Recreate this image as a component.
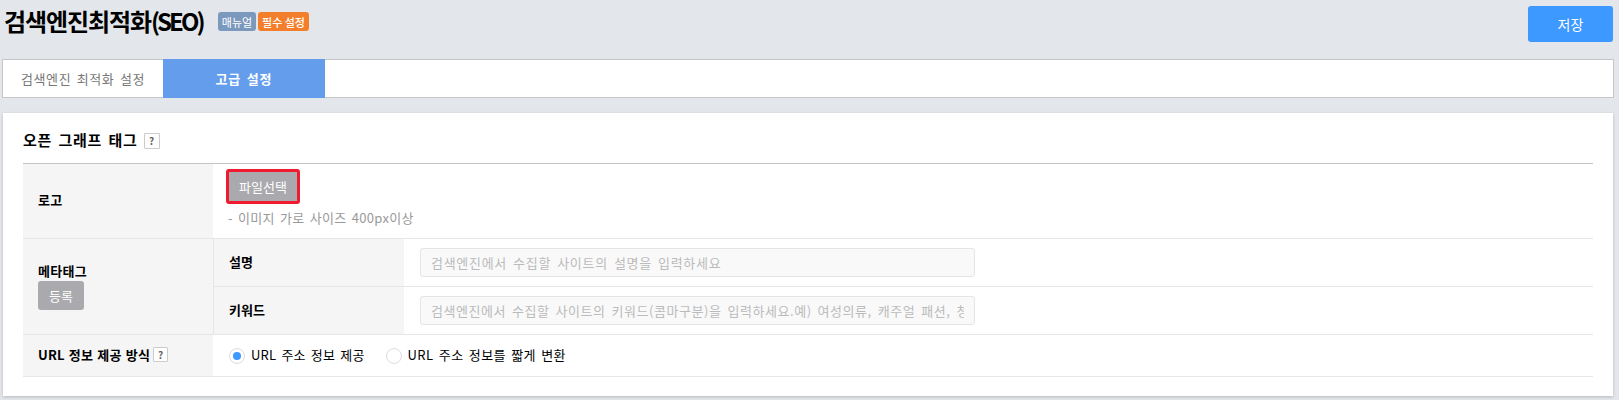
<div class="page">
  <header class="head">
    <div class="head-left">
      <h1>검색엔진최적화<span class="seo">(SEO)</span></h1>
      <span class="badge manual">매뉴얼</span>
      <span class="badge required">필수 설정</span>
    </div>
    <button class="save">저장</button>
  </header>

  <nav class="tabs">
    <div class="tab">검색엔진 최적화 설정</div>
    <div class="tab active">고급 설정</div>
  </nav>

  <section class="card">
    <h2>오픈 그래프 태그 <span class="help large">?</span></h2>

    <div class="table">
      <div class="row logo-row">
        <div class="th">로고</div>
        <div class="td logo-cell">
          <button class="file">파일선택</button>
          <p class="hint">- 이미지 가로 사이즈 400px이상</p>
        </div>
      </div>

      <div class="row meta-row">
        <div class="th meta-th">
          <span>메타태그</span>
          <button class="add">등록</button>
        </div>
        <div class="sub">
          <div class="sub-row">
            <div class="sub-th">설명</div>
            <div class="sub-td">
              <input disabled placeholder="검색엔진에서 수집할 사이트의 설명을 입력하세요" />
            </div>
          </div>
          <div class="sub-row last">
            <div class="sub-th">키워드</div>
            <div class="sub-td">
              <input class="keywords" disabled placeholder="검색엔진에서 수집할 사이트의 키워드(콤마구분)을 입력하세요.예) 여성의류, 캐주얼 패션, 청바지" />
            </div>
          </div>
        </div>
      </div>

      <div class="row url-row">
        <div class="th url-th">URL 정보 제공 방식 <span class="help">?</span></div>
        <div class="td radios">
          <label class="radio"><span class="dot on"></span><span class="radio-text">URL 주소 정보 제공</span></label>
          <label class="radio"><span class="dot"></span><span class="radio-text wide">URL 주소 정보를 짧게 변환</span></label>
        </div>
      </div>
    </div>
  </section>
</div>

<style>
  :global(body) {
    margin: 0;
    background: #e3e6ea;
  }

  .page {
    height: 400px;
    overflow: hidden;
    font-family: "Noto Sans CJK KR", "Noto Sans", sans-serif;
    color: #000;
    font-size: 13px;
  }

  .head {
    display: flex;
    justify-content: space-between;
    align-items: flex-start;
    height: 59px;
    padding: 6px 6px 0 4px;
    box-sizing: border-box;
  }

  .head-left {
    display: flex;
    align-items: flex-start;
  }

  h1 {
    width: 214px;
    margin: -2px 0 0;
    font-size: 24px;
    font-weight: 700;
    letter-spacing: -1.1px;
    line-height: 34px;
    white-space: nowrap;
  }

  .seo {
    letter-spacing: -2.9px;
  }

  .badge {
    display: inline-flex;
    align-items: center;
    justify-content: center;
    height: 19px;
    margin-top: 6px;
    border-radius: 3px;
    color: #fff;
    font-size: 11px;
  }

  .manual {
    width: 38px;
    background: #7b98bd;
    margin-right: 2px;
  }

  .required {
    width: 51px;
    background: #f37f2c;
    font-weight: 500;
  }

  .save {
    width: 85px;
    height: 36px;
    border: 0;
    border-radius: 3px;
    background: #3d98ff;
    color: #fff;
    font: inherit;
    font-size: 14px;
  }

  .tabs {
    display: flex;
    height: 39px;
    margin: 0 5px 0 2px;
    background: #fff;
    border: 1px solid #c6c6c6;
    box-sizing: border-box;
  }

  .tab {
    display: flex;
    align-items: center;
    justify-content: center;
    width: 160px;
    color: #777;
    font-size: 13px;
    letter-spacing: 0.6px;
    word-spacing: 2px;
  }

  .tab.active {
    width: 162px;
    margin: -1px 0;
    background: #659ded;
    color: #fff;
    font-weight: 700;
    letter-spacing: 0.8px;
  }

  .card {
    margin: 15px 6px 0 3px;
    height: 283px;
    padding: 0 20px;
    background: #fff;
    box-sizing: border-box;
    box-shadow: 0 1px 3px rgba(0, 0, 0, 0.2);
  }

  h2 {
    display: flex;
    align-items: center;
    gap: 6px;
    height: 50px;
    margin: 0;
    padding-top: 3px;
    box-sizing: border-box;
    font-size: 15px;
    font-weight: 700;
    letter-spacing: 0.8px;
    word-spacing: 2px;
  }

  .help {
    display: inline-flex;
    align-items: center;
    justify-content: center;
    width: 15px;
    height: 15px;
    border: 1px solid #ccc;
    border-radius: 1px;
    box-sizing: border-box;
    background: #fff;
    color: #666;
    font-size: 10px;
    font-weight: 700;
    line-height: 1;
    letter-spacing: 0;
  }

  .help.large {
    width: 16px;
    height: 16px;
    margin-top: 2px;
  }

  .table {
    border-top: 1px solid #c4c4c4;
  }

  .row {
    display: flex;
    border-bottom: 1px solid #e6e6e6;
    box-sizing: border-box;
  }

  .logo-row { height: 75px; }
  .meta-row { height: 96px; }
  .url-row { height: 42px; }

  .th {
    display: flex;
    align-items: center;
    gap: 4px;
    width: 190px;
    flex: none;
    padding: 0 0 4px 15px;
    box-sizing: border-box;
    background: #f5f5f5;
    font-size: 13px;
    font-weight: 700;
    letter-spacing: 0.3px;
    word-spacing: 1.5px;
  }

  .url-th {
    gap: 3px;
    padding-bottom: 2px;
    letter-spacing: 0.2px;
    word-spacing: 1px;
  }

  .td {
    flex: 1;
    padding-left: 13px;
  }

  .logo-cell {
    padding-top: 5px;
  }

  .file {
    display: block;
    width: 74px;
    height: 35px;
    padding: 0;
    border: 3px solid #ee1c2e;
    border-radius: 3px;
    background: #a9a9ae;
    color: #fff;
    font: inherit;
    font-size: 13px;
  }

  .hint {
    margin: 5px 0 0;
    padding-left: 2px;
    color: #999;
    font-size: 13px;
    line-height: 18px;
    letter-spacing: 0.3px;
    word-spacing: 2px;
  }

  .meta-th {
    flex-direction: column;
    align-items: flex-start;
    justify-content: center;
    gap: 0;
    width: 191px;
    padding: 0 0 0 15px;
    border-right: 1px solid #e6e6e6;
  }

  .meta-th span {
    margin: -2px 0 1px;
  }

  .add {
    width: 46px;
    height: 29px;
    padding: 0;
    border: 0;
    border-radius: 3px;
    background: #a9a9ae;
    color: #fff;
    font: inherit;
    font-weight: 400;
    font-size: 13px;
  }

  .sub {
    flex: 1;
    display: flex;
    flex-direction: column;
  }

  .sub-row {
    display: flex;
    flex: 1;
    border-bottom: 1px solid #e6e6e6;
  }

  .sub-row.last {
    border-bottom: 0;
  }

  .sub-th {
    display: flex;
    align-items: center;
    width: 190px;
    flex: none;
    padding: 0 0 3px 15px;
    box-sizing: border-box;
    background: #f5f5f5;
    font-size: 13px;
    font-weight: 700;
  }

  .sub-td {
    flex: 1;
    display: flex;
    align-items: center;
    padding-left: 16px;
  }

  input {
    width: 555px;
    height: 29px;
    padding: 0 10px;
    border: 1px solid #e5e5e5;
    border-radius: 3px;
    background: #f9f9f9;
    box-sizing: border-box;
    font: inherit;
    font-size: 13px;
    letter-spacing: 0.7px;
    word-spacing: 2.5px;
  }

  input.keywords {
    letter-spacing: 0.55px;
  }

  input::placeholder {
    color: #bbb;
    opacity: 1;
  }

  .radios {
    display: flex;
    align-items: center;
    gap: 21px;
    padding-left: 16px;
  }

  .radio {
    display: flex;
    align-items: center;
    gap: 6px;
    font-size: 13px;
    letter-spacing: 0.2px;
    word-spacing: 2px;
  }

  .radio-text {
    margin-top: -2px;
  }

  .radio-text.wide {
    letter-spacing: 0.4px;
  }

  .dot {
    display: block;
    position: relative;
    width: 16px;
    height: 16px;
    border: 1px solid #ddd;
    border-radius: 50%;
    background: #fff;
    box-sizing: border-box;
  }

  .dot.on::after {
    content: "";
    position: absolute;
    inset: 3px;
    border-radius: 50%;
    background: #3d98ff;
  }
</style>
